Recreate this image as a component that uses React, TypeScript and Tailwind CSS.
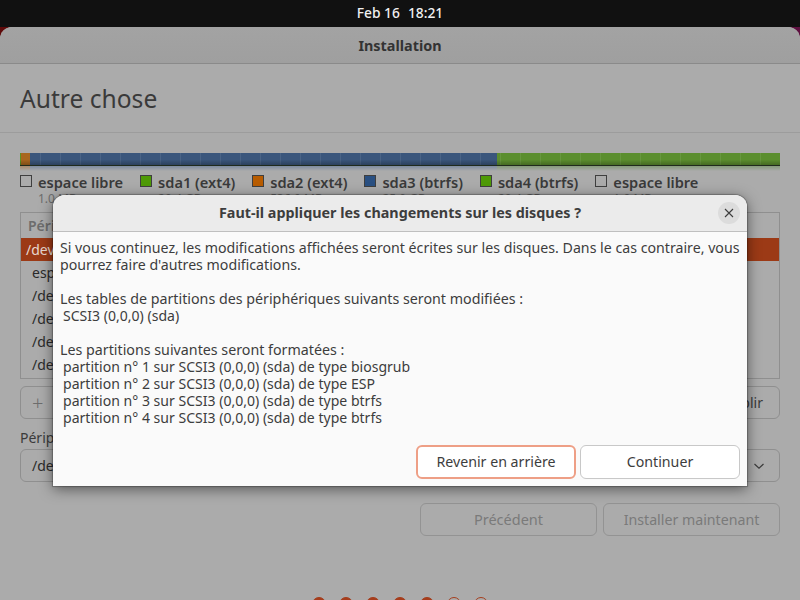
import React from "react";

const font = { fontFamily: '"Noto Sans", sans-serif' };

function Legend({ color, name, size }: { color: string; name: string; size: string }) {
  return (
    <div className="flex items-start gap-[6px]">
      <span className={`mt-[1px] h-[12px] w-[12px] border border-[#3f3f3f] ${color}`} />
      <div className="-mt-[1px] flex flex-col">
        <span className="text-[14.6px] leading-[18px] font-semibold text-[#3a3a3a]">{name}</span>
        <span className="text-[12px] leading-[15px] text-[#6b6b6b]">{size}</span>
      </div>
    </div>
  );
}

function Row({ text }: { text: string }) {
  return <div className="h-[23px] pl-[11px] text-[14px] leading-[23px] text-[#2a2a2a]">{text}</div>;
}

function Item({ text }: { text: string }) {
  return <div className="h-[17px] pl-[3px] text-[14.05px] leading-[17px]">{text}</div>;
}

const ticks =
  "bg-[repeating-linear-gradient(90deg,rgba(255,255,255,0.08)_0,rgba(255,255,255,0.08)_1px,transparent_1px,transparent_20px)]";

export default function App() {
  return (
    <div style={font} className="relative flex h-[600px] w-[800px] flex-col overflow-hidden bg-[linear-gradient(90deg,#5e0a0a,#5e1040)]">
      <div className="flex h-[27px] shrink-0 items-center justify-center gap-[8px] bg-[#111111] text-[13.8px] font-medium text-[#f0f0f0]">
        <span>Feb 16</span>
        <span>18:21</span>
      </div>

      <div className="flex flex-1 flex-col overflow-hidden rounded-t-[12px] bg-[#ababab]">
        <div className="flex h-[37px] shrink-0 items-center justify-center border-b border-[#8a8a8a] bg-[linear-gradient(#a3a3a3,#9f9f9f)] pt-[1px] text-[14.4px] font-bold text-[#333333]">
          Installation
        </div>
        <div className="flex h-[69px] shrink-0 items-center border-b border-[#9c9c9c] pl-[20px] pt-[2px] text-[24.6px] text-[#3a3a3a]">
          Autre chose
        </div>

        <div className="flex flex-col px-[20px] pt-[20px]">
          <div className="relative flex h-[13px] border-b border-[#1f2a1c]">
            <div className="w-[1px] bg-[#4f8a10]" />
            <div className="w-[9px] bg-[#a8661f]" />
            <div className="w-[467px] bg-[#3a567c]" />
            <div className="flex-1 bg-[#5b8e2e]" />
            <div className={`absolute inset-0 ${ticks}`} />
            <div className="absolute inset-0 bg-[linear-gradient(transparent_55%,rgba(0,0,0,0.25))]" />
          </div>
          <div className="h-[5px] bg-[linear-gradient(90deg,#a78a6c_0,#a78a6c_10px,#7d8ba0_10px,#7d8ba0_477px,#84997a_477px)] [mask-image:linear-gradient(#000,transparent)]" />

          <div className="mt-[3px] flex h-[36px] gap-[17px]">
            <Legend color="bg-transparent" name="espace libre" size="1.0 MB" />
            <Legend color="bg-[#4e9a06]" name="sda1 (ext4)" size="20.4 GB" />
            <Legend color="bg-[#b85c00]" name="sda2 (ext4)" size="536.9 MB" />
            <Legend color="bg-[#2a5082]" name="sda3 (btrfs)" size="25.0 GB" />
            <Legend color="bg-[#4e9a06]" name="sda4 (btrfs)" size="20.4 GB" />
            <Legend color="bg-transparent" name="espace libre" size="1.0 MB" />
          </div>

          <div className="mt-[2px] flex h-[167px] flex-col border border-[#8f8f8f] bg-[#ababab]">
            <div className="h-[25px] pl-[7px] text-[14px] leading-[25px] font-semibold text-[#6d6d6d]">Périphérique</div>
            <div className="h-[23px] bg-[#9c3a16] pl-[5px] text-[14px] leading-[23px] text-[#e8d8d0]">/dev/sda</div>
            <Row text="espace libre" />
            <Row text="/dev/sda1" />
            <Row text="/dev/sda2" />
            <Row text="/dev/sda3" />
            <Row text="/dev/sda4" />
          </div>

          <div className="mt-[7px] flex h-[33px] items-center justify-between rounded-[6px] border border-[#8f8f8f] pl-[11px] pr-[16px]">
            <span className="text-[20px] font-light text-[#6d6d6d]">+</span>
            <span className="text-[14px] text-[#3a3a3a]">Rétablir</span>
          </div>

          <div className="mt-[7px] h-[23px] text-[14px] leading-[23px] text-[#3a3a3a]">Périphérique pour l'installation du programme de démarrage :</div>

          <div className="flex h-[33px] items-center justify-between rounded-[6px] border border-[#8f8f8f] pl-[11px] pr-[14px] text-[14px] text-[#2a2a2a]">
            <span>/dev/sda</span>
            <svg width="12" height="12" viewBox="0 0 12 12" fill="none" stroke="#3a3a3a" strokeWidth="1.2">
              <path d="M1.5 4 L6 8.2 L10.5 4" />
            </svg>
          </div>

          <div className="mt-[21px] flex h-[33px] justify-end gap-[6px]">
            <div className="flex w-[177px] items-center justify-center rounded-[6px] border border-[#939393] text-[14.5px] text-[#7a7a7a]">Précédent</div>
            <div className="flex w-[177px] items-center justify-center rounded-[6px] border border-[#939393] text-[14.2px] text-[#7a7a7a]">Installer maintenant</div>
          </div>

          <div className="mt-[61px] flex justify-center gap-[13px]">
            {[1, 1, 1, 1, 1, 0, 0].map((f, i) => (
              <span key={i} className={`h-[14px] w-[14px] rounded-full border border-[#a53d1c] ${f ? "bg-[#a53d1c]" : "bg-transparent"}`} />
            ))}
          </div>
        </div>
      </div>

      <div className="absolute left-[53px] top-[195px] flex h-[291px] w-[694px] flex-col rounded-t-[12px] bg-[#fafafa] shadow-[0_0_1px_1px_rgba(0,0,0,0.25),0_3px_14px_rgba(0,0,0,0.5)]">
        <div className="relative flex h-[37px] shrink-0 items-center justify-center rounded-t-[12px] border-b border-[#bfbfbf] bg-[#ebebeb] text-[14.35px] font-bold text-[#3d3d3d]">
          Faut-il appliquer les changements sur les disques ?
          <div className="absolute right-[7px] top-[7px] flex h-[22px] w-[22px] items-center justify-center rounded-full bg-[#dcdcdc]">
            <svg width="10" height="10" viewBox="0 0 10 10" stroke="#3d3d3d" strokeWidth="1.1">
              <path d="M1 1 L9 9 M9 1 L1 9" />
            </svg>
          </div>
        </div>
        <div className="flex flex-1 flex-col whitespace-pre pl-[7px] pt-[7px] text-[#3d3d3d]">
          <div className="h-[17px] text-[14.18px] leading-[17px]">Si vous continuez, les modifications affichées seront écrites sur les disques. Dans le cas contraire, vous</div>
          <div className="h-[17px] text-[14.18px] leading-[17px]">pourrez faire d'autres modifications.</div>
          <div className="mt-[17px] h-[17px] text-[14.25px] leading-[17px]">Les tables de partitions des périphériques suivants seront modifiées :</div>
          <Item text="SCSI3 (0,0,0) (sda)" />
          <div className="mt-[17px] h-[17px] text-[14.25px] leading-[17px]">Les partitions suivantes seront formatées :</div>
          <Item text="partition n° 1 sur SCSI3 (0,0,0) (sda) de type biosgrub" />
          <Item text="partition n° 2 sur SCSI3 (0,0,0) (sda) de type ESP" />
          <Item text="partition n° 3 sur SCSI3 (0,0,0) (sda) de type btrfs" />
          <Item text="partition n° 4 sur SCSI3 (0,0,0) (sda) de type btrfs" />
        </div>
        <div className="flex justify-end gap-[4px] pb-[7px] pr-[7px]">
          <div className="flex h-[34px] w-[160px] items-center justify-center rounded-[6px] border-2 border-[#ee9f86] bg-[#ffffff] pb-[1px] text-[14.2px] text-[#3d3d3d]">Revenir en arrière</div>
          <div className="flex h-[34px] w-[160px] items-center justify-center rounded-[6px] border border-[#c8c8c8] bg-[#ffffff] pb-[1px] text-[14.2px] text-[#3d3d3d]">Continuer</div>
        </div>
      </div>
    </div>
  );
}
